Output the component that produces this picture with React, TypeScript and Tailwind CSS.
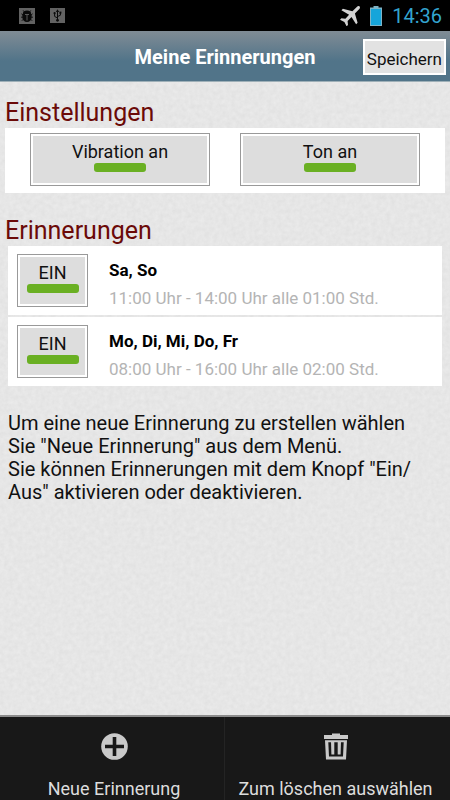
import { useState } from "react";

const reminders = [
  { id: 1, days: "Sa, So", time: "11:00 Uhr - 14:00 Uhr alle 01:00 Std." },
  { id: 2, days: "Mo, Di, Mi, Do, Fr", time: "08:00 Uhr - 16:00 Uhr alle 02:00 Std." },
];

function BugIcon() {
  return (
    <svg className="h-4 w-4" viewBox="0 0 16 16" aria-hidden="true">
      <rect width="16" height="16" fill="#626262" />
      <path d="M3.8 6.2a4.2 3.6 0 0 1 8.4 0z" fill="#0a0a0a" />
      <path d="M3.4 6h9.2v3.6a4.6 4.4 0 0 1-9.2 0z" fill="#0a0a0a" />
      <path
        d="M5.2 3.8 4.2 2.4M10.8 3.8l1-1.4M4 7.2 2.4 5.8M4 9.2H2M4.4 11.2 2.8 12.8M12 7.2l1.6-1.4M12 9.2h2M11.6 11.2l1.6 1.6"
        stroke="#0a0a0a"
        strokeWidth="0.9"
      />
      <path d="M8 6.500v6M6 6.500h4" stroke="#626262" strokeWidth="0.9" />
    </svg>
  );
}

function UsbIcon() {
  return (
    <svg className="h-[15px] w-[15px]" viewBox="0 0 15 15" aria-hidden="true">
      <rect width="15" height="15" fill="#626262" />
      <path
        d="M7.5 12.5V3M7.5 10 4.6 8.4V5.6M7.5 8.6l2.9-1.4V5"
        fill="none"
        stroke="#0a0a0a"
        strokeWidth="1"
      />
      <path d="M7.5 1.2 9.2 4H5.8z" fill="#0a0a0a" />
      <circle cx="7.5" cy="12.3" r="1.4" fill="#0a0a0a" />
      <circle cx="4.6" cy="5.2" r="1.1" fill="#0a0a0a" />
      <rect x="9.4" y="3.6" width="2" height="2" fill="#0a0a0a" />
    </svg>
  );
}

function PlaneIcon() {
  return (
    <svg className="h-5 w-5" viewBox="0 0 20 20" aria-hidden="true">
      <path
        d="M19.6.4c.7.8.3 2-.5 2.800L14.900 7.600l2.700 9.200-1.500 1.500-4.600-7.200-3.900 3.800.4 4-1.400 1.400-2.200-4.300L0 13.700l1.400-1.400 4 .4 3.700-4L1.400 4.300l1.500-1.500 9.500 2.500L16.800.9C17.600.1 18.800-.3 19.600.4z"
        fill="#d2d2d2"
      />
    </svg>
  );
}

function BatteryIcon() {
  return (
    <svg className="h-5 w-3" viewBox="0 0 12 20" aria-hidden="true">
      <path d="M3.5 0h5v1.5H12V20H0V1.5h3.5z" fill="#7fb4c6" />
      <rect x="1" y="3" width="10" height="16" fill="#16a5da" />
    </svg>
  );
}

function PlusCircleIcon() {
  return (
    <svg className="h-[27px] w-[27px]" viewBox="0 0 27 27" aria-hidden="true">
      <circle cx="13.5" cy="13.5" r="13.3" fill="#c9c9c9" />
      <path d="M13.5 4v19M4 13.5h19" stroke="#181818" strokeWidth="3.6" />
    </svg>
  );
}

function TrashIcon() {
  return (
    <svg className="h-[27px] w-6" viewBox="0 0 24 27" aria-hidden="true">
      <path
        fillRule="evenodd"
        d="M0 2h8V.5h8V2h8v4H0zM1 7.300h22l-1 19.200H2zM4.300 9.300 5 23.500h14l.7-14.200z"
        fill="#c9c9c9"
      />
      <path d="M7 8.500h3.300V21.500H7.400zM13.700 8.500H17l-.4 13h-2.900z" fill="#c9c9c9" />
    </svg>
  );
}

// Fine paper grain behind the content
function PaperTexture() {
  return (
    <svg className="pointer-events-none absolute inset-0 h-full w-full" aria-hidden="true">
      <filter id="paper" colorInterpolationFilters="sRGB">
        <feTurbulence type="fractalNoise" baseFrequency="0.22" numOctaves="3" seed="4" />
        <feColorMatrix values="0.05 0 0 0 0.877  0.05 0 0 0 0.877  0.05 0 0 0 0.877  0 0 0 0 1" />
      </filter>
      <rect width="100%" height="100%" filter="url(#paper)" />
    </svg>
  );
}

function ToggleButton({ label, className = "" }: { label: string; className?: string }) {
  const [on, setOn] = useState(true);

  return (
    <button
      type="button"
      aria-pressed={on}
      onClick={() => setOn(!on)}
      className={`flex h-[53px] flex-col items-center border border-[#999999] bg-[#dddddd] pt-2 text-lg leading-5 text-[#111111] inset-ring-2 inset-ring-white ${className}`}
    >
      {label}
      <span className={`mt-px h-[9px] w-[52px] rounded-[3px] ${on ? "bg-[#6ab023]" : "bg-[#aaaaaa]"}`} />
    </button>
  );
}

export default function App() {
  return (
    <div className="flex min-h-screen flex-col bg-[#e6e6e6] font-[Roboto,sans-serif] text-black">
      <div className="flex h-[31px] items-center justify-between bg-black pr-2 pl-[19px]">
        <div className="flex items-center gap-[15px]">
          <BugIcon />
          <UsbIcon />
        </div>
        <div className="flex items-center gap-2.5">
          <PlaneIcon />
          <BatteryIcon />
          <span className="text-xl leading-6 text-[#33a5d0]">14:36</span>
        </div>
      </div>

      <header className="grid h-[51px] grid-cols-[1fr_auto_1fr] items-center border-b border-[#9fb0b8] bg-linear-to-b from-[#808c95] to-[#517489] to-60% px-1 pt-0.5">
        <h1 className="col-start-2 text-xl leading-6 font-bold text-white">Meine Erinnerungen</h1>
        <button
          type="button"
          className="h-9 justify-self-end border-2 border-white bg-[#e2e2e2] px-0.5 pt-1 text-[17px] leading-6 text-[#111111]"
        >
          Speichern
        </button>
      </header>

      <main className="relative flex-1">
        <PaperTexture />
        <div className="relative">
          <section className="px-[5px] pt-4">
            <h2 className="text-[25px] leading-[30px] text-[#6b0a08]">Einstellungen</h2>
            <div className="grid grid-cols-2 gap-[30px] bg-white px-[25px] pt-[5px] pb-[7px]">
              <ToggleButton label="Vibration an" />
              <ToggleButton label="Ton an" />
            </div>
          </section>

          <section className="pt-[23px]">
            <h2 className="px-[5px] text-[25px] leading-[30px] text-[#6b0a08]">Erinnerungen</h2>
            <ul className="flex flex-col gap-0.5 px-2">
              {reminders.map((reminder) => (
                <li key={reminder.id} className="flex h-[69px] items-start bg-white px-[9px] pt-2">
                  <ToggleButton label="EIN" className="w-[71px]" />
                  <div className="pt-1 pl-[21px]">
                    <p className="text-[17px] leading-6 font-bold">{reminder.days}</p>
                    <p className="mt-1 text-[17px] leading-6 text-[#b4b4b4]">{reminder.time}</p>
                  </div>
                </li>
              ))}
            </ul>
          </section>

          <p className="px-2 pt-[26px] text-xl leading-[23px] text-[#111111]">
            Um eine neue Erinnerung zu erstellen wählen
            <br />
            Sie "Neue Erinnerung" aus dem Menü.
            <br />
            Sie können Erinnerungen mit dem Knopf "Ein/
            <br />
            Aus" aktivieren oder deaktivieren.
          </p>
        </div>
      </main>

      <nav className="grid h-[85px] grid-cols-2 border-t-2 border-[#8c8c8c] bg-[#181818] text-lg leading-6 text-[#dddddd]">
        <button type="button" className="flex flex-col items-center gap-[17px] border-r border-[#242424] pt-4 pl-1">
          <PlusCircleIcon />
          Neue Erinnerung
        </button>
        <button type="button" className="flex flex-col items-center gap-[17px] pt-4 pr-1">
          <TrashIcon />
          Zum löschen auswählen
        </button>
      </nav>
    </div>
  );
}
